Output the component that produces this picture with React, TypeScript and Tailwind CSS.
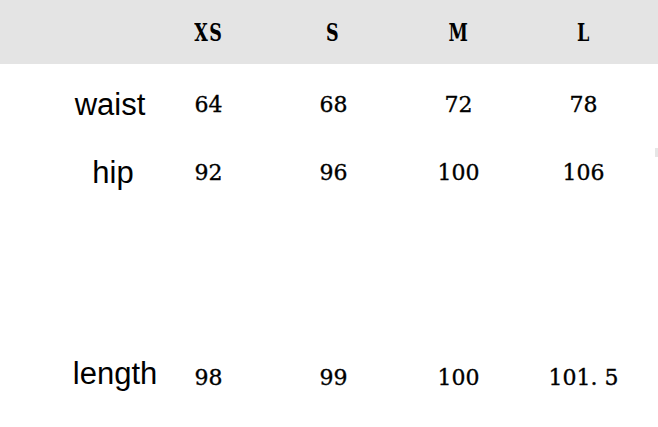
const sizes = ["XS", "S", "M", "L"];

const rows = [
  { label: "waist", values: ["64", "68", "72", "78"], h: "h-[74px]", shift: "pl-[74px]" },
  { label: "hip", values: ["92", "96", "100", "106"], h: "h-[62px]", shift: "pl-[80px]" },
  { label: "length", values: ["98", "99", "100", "101.5"], h: "h-[250px]", shift: "pl-[84px]" },
];

function Num({ v }: { v: string }) {
  // the source font sets the decimal point on a wide cell
  const [a, b] = v.split(".");
  return (
    <span className="font-['DejaVu_Serif',serif] text-[22px] text-black leading-none [-webkit-text-stroke:0.35px_black]">
      {a}
      {b !== undefined && (
        <>
          <span className="mr-[7px]">.</span>
          {b}
        </>
      )}
    </span>
  );
}

export default function App() {
  return (
    <div className="w-[658px] h-[427px] bg-white relative overflow-hidden">
      {/* header band */}
      <div className="h-[64px] bg-[#e4e4e4] grid grid-cols-[146px_repeat(4,125px)] items-center">
        <div />
        {sizes.map((s) => (
          <div key={s} className="flex justify-center">
            <span className="font-['DejaVu_Serif',serif] font-bold text-[25px] text-black scale-x-[0.7] tracking-[2px] inline-block leading-none">
              {s}
            </span>
          </div>
        ))}
      </div>

      <div className="pt-[4px]">
        {rows.map((r, i) => (
          <div
            key={r.label}
            className={`grid grid-cols-[146px_repeat(4,125px)] ${i === 2 ? "items-end pb-[65px]" : "items-center"} ${r.h}`}
          >
            <div className={`flex justify-center ${r.shift}`}>
              <span className="font-['Liberation_Sans',Arial,sans-serif] text-[31px] text-black leading-none -mt-[2px]">
                {r.label}
              </span>
            </div>
            {r.values.map((v) => (
              <div key={v} className="flex justify-center">
                <Num v={v} />
              </div>
            ))}
          </div>
        ))}
      </div>

      <div className="absolute left-[655px] top-[148px] w-[3px] h-[9px] bg-[#e6e6e6]" />
    </div>
  );
}
